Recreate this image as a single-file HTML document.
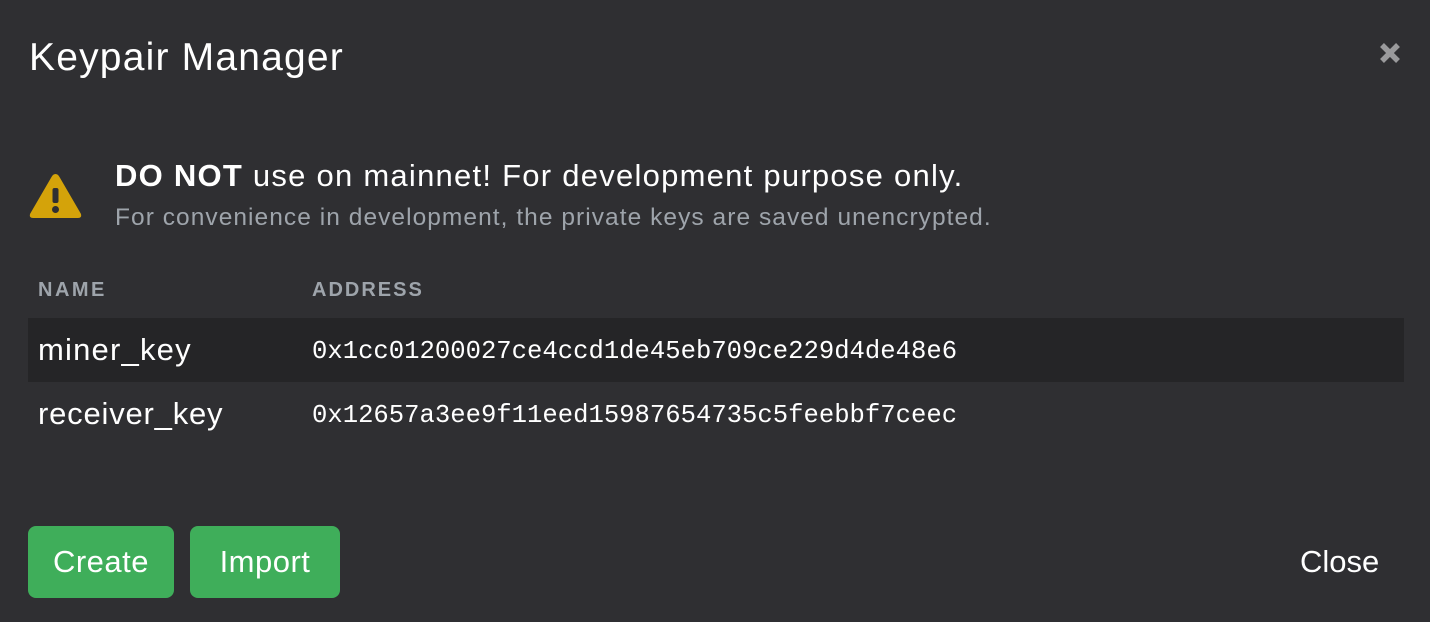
<!DOCTYPE html>
<html><head><style>
body{margin:0;width:1430px;height:622px;background:#2f2f32;font-family:"Liberation Sans",sans-serif;color:#fff;position:relative;overflow:hidden}
.a{position:absolute;white-space:nowrap}
.btn{position:absolute;top:526px;height:72px;background:#3fae5a;border-radius:8px;font-size:31px;line-height:72px;text-align:center;color:#fff;letter-spacing:0.5px}
.mono{font-family:"Liberation Mono",monospace;font-size:25.6px}
</style></head><body>
<div class="a" style="left:29px;top:36px;font-size:39px;letter-spacing:1.2px">Keypair Manager</div>
<svg class="a" style="left:1378px;top:41px" width="24" height="24" viewBox="0 0 24 24"><path d="M4 4L20 20M20 4L4 20" stroke="#9a9a9c" stroke-width="5.5"/></svg>
<svg class="a" style="left:28px;top:171px" width="55" height="49" viewBox="0 0 55 49"><path d="M27.5 3 Q30 3 31.5 6 L53 43 Q54 47 50 47 L5 47 Q1 47 2 43 L23.5 6 Q25 3 27.5 3Z" fill="#d4a30a"/><rect x="24.5" y="17" width="6" height="15" rx="2" fill="#2f2f32"/><circle cx="27.5" cy="38.5" r="3.5" fill="#2f2f32"/></svg>
<div class="a" style="left:115px;top:158px;font-size:31px;letter-spacing:1.25px"><b>DO NOT</b> use on mainnet! For development purpose only.</div>
<div class="a" style="left:115px;top:204px;font-size:24.5px;color:#9ea4ab;letter-spacing:1.05px">For convenience in development, the private keys are saved unencrypted.</div>
<div class="a" style="left:38px;top:279px;font-size:20px;font-weight:bold;color:#9ea4ab;letter-spacing:2.5px">NAME</div>
<div class="a" style="left:312px;top:279px;font-size:20px;font-weight:bold;color:#9ea4ab;letter-spacing:2px">ADDRESS</div>
<div class="a" style="left:28px;top:318px;width:1376px;height:64px;background:#252527"></div>
<div class="a" style="left:38px;top:332px;font-size:31px;letter-spacing:1.2px">miner_key</div>
<div class="a mono" style="left:312px;top:337px">0x1cc01200027ce4ccd1de45eb709ce229d4de48e6</div>
<div class="a" style="left:38px;top:396px;font-size:31px;letter-spacing:0.8px">receiver_key</div>
<div class="a mono" style="left:312px;top:401px">0x12657a3ee9f11eed15987654735c5feebbf7ceec</div>
<div class="btn" style="left:28px;width:146px">Create</div>
<div class="btn" style="left:190px;width:150px">Import</div>
<div class="a" style="left:1300px;top:544px;font-size:31px">Close</div>
</body></html>
